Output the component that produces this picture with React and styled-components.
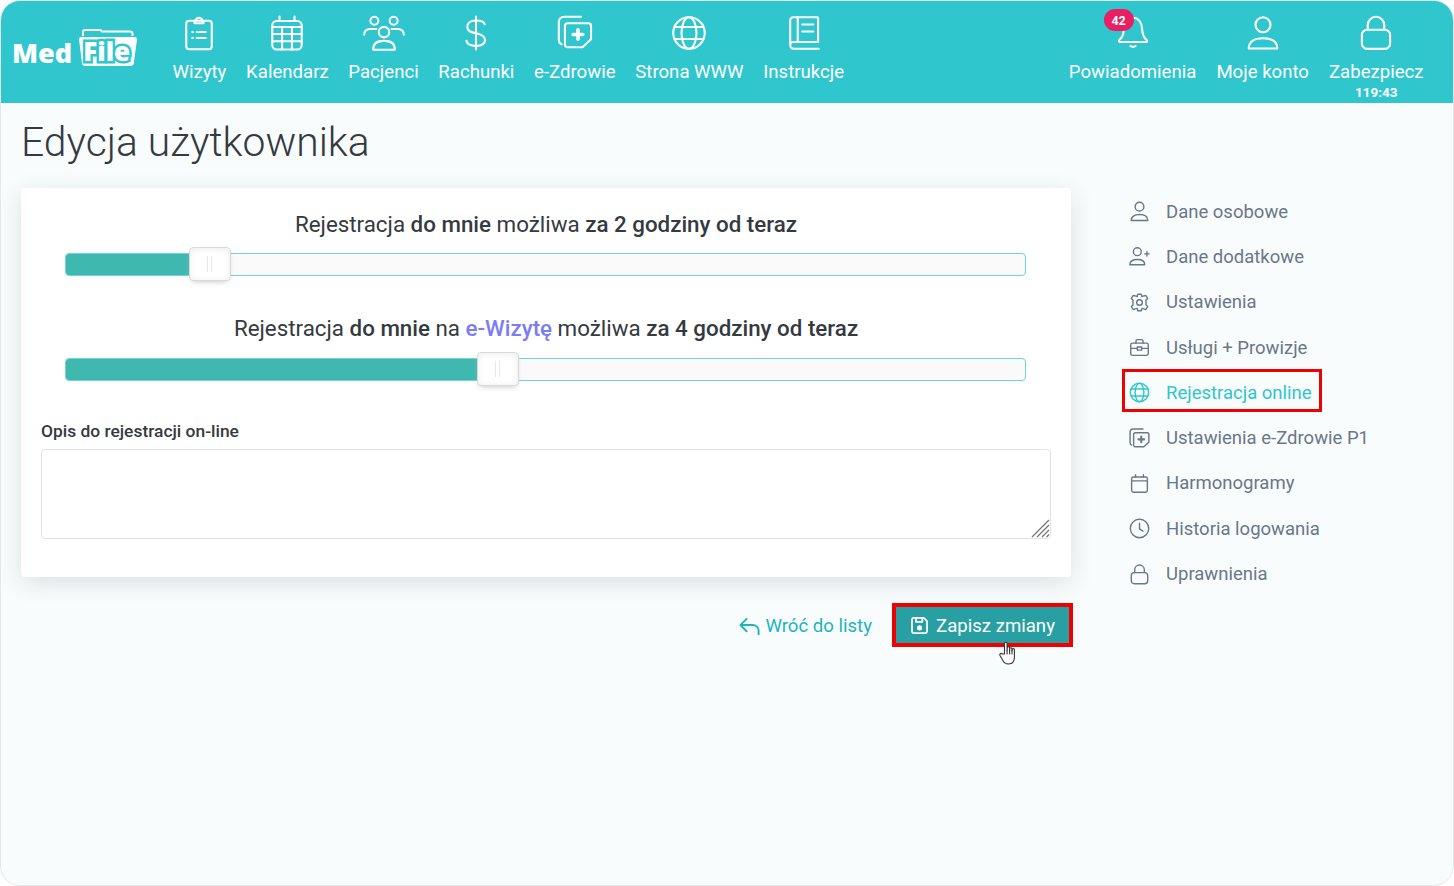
import styled, { createGlobalStyle } from "styled-components";

const GlobalStyle = createGlobalStyle`
  html, body {
    margin: 0;
    padding: 0;
    background: #ffffff;
  }
  *, *::before, *::after {
    box-sizing: border-box;
  }
`;

const Icon = ({ size = 36, sw = 1.4, children }) => (
  <svg width={size} height={size} viewBox="0 0 24 24" fill="none" stroke="currentColor" strokeWidth={sw} strokeLinecap="round" strokeLinejoin="round">
    {children}
  </svg>
);

const icons = {
  clipboard: (
    <>
      <rect x="3.5" y="3.800" width="17" height="19" rx="2" />
      <path d="M9 5.500h6V3.800h-1a2 2 0 0 0-4 0H9z" />
      <path d="M7.500 11.300h.4M7.500 15.300h.4M10.500 11.300h6M10.500 15.300h6" />
    </>
  ),
  calendar: (
    <>
      <rect x="2.200" y="4" width="19.600" height="19" rx="3" />
      <path d="M7 1v3M17 1v3M2.200 8h19.600M2.200 12.700h19.600M2.200 17.500h19.600M8.700 8v15M15.300 8v15" />
    </>
  ),
  users: (
    <>
      <circle cx="6.500" cy="5" r="2.300" />
      <circle cx="17.500" cy="5" r="2.300" />
      <circle cx="12" cy="11.500" r="3" />
      <path d="M.7 13c0-2.300 1.500-3.300 3.500-3.300h3.500M23.300 13c0-2.300-1.500-3.300-3.500-3.300h-3.500" />
      <path d="M5.800 21.300c0-3.300 2.500-4.800 6.200-4.800s6.200 1.500 6.200 4.800c0 .2-.2.3-.4.3H6.200c-.2 0-.4-.1-.4-.3z" />
    </>
  ),
  dollar: <path d="M12 1v22M17.800 6.200C17.200 4.300 15.200 3.700 12 3.700 8.300 3.700 6.200 5.500 6.200 8c0 2.700 2.300 3.500 5.800 4.200 3.500.7 6 1.800 6 4.500 0 2.600-2.500 3.900-6 3.900-3.500 0-5.800-1-6.400-3.400" />,
  health: (
    <>
      <path d="M3 19.500C1.800 19 1.200 18 1.200 16.500V5c0-2.500 1.500-3.800 3.800-3.800h11" />
      <path d="M7 5.500h14a1.700 1.700 0 0 1 1.700 1.700v9L17 21.500H7a1.700 1.700 0 0 1-1.700-1.700V7.200A1.700 1.700 0 0 1 7 5.500z" />
      <path d="M14 9.800v6.400M10.800 13h6.400" strokeWidth="2.400" />
    </>
  ),
  globe: (
    <>
      <circle cx="12" cy="12" r="10.500" />
      <ellipse cx="12" cy="12" rx="5" ry="10.500" />
      <path d="M2.500 8h19M2.500 16h19" />
    </>
  ),
  book: (
    <>
      <path d="M2.800 19.800V3.500a2 2 0 0 1 2-2h16a.6.6 0 0 1 .6.600V18H4.800a2 2 0 0 0-2 1.800 2.400 2.400 0 0 0 2 2.700h17" />
      <path d="M7.800 1.500V18M10.800 6.300h7.400M10.800 11h7.400" />
    </>
  ),
  bell: (
    <>
      <path d="M3 16.500c2-1.500 2.700-3.500 2.900-7C6.200 4.500 8.700 1.800 12 1.800s5.800 2.700 6.100 7.700c.2 3.500.9 5.500 2.900 7 .7.600.5 1.500-.4 1.500H3.400c-.9 0-1.100-.9-.4-1.500z" />
      <path d="M10.300 20.800c1.100.6 2.300.6 3.400 0" />
    </>
  ),
  user: (
    <>
      <circle cx="12" cy="6.500" r="5" />
      <path d="M2.500 22.300c0-4.500 3.500-6.800 9.500-6.800s9.500 2.300 9.500 6.800z" />
    </>
  ),
  lock: (
    <>
      <rect x="2.600" y="9.800" width="18.800" height="12.800" rx="3.500" />
      <path d="M6.500 9.800V6.700a5.500 5.500 0 0 1 11 0v3.100" />
    </>
  ),
  userPlus: (
    <>
      <circle cx="9.500" cy="6.500" r="4.500" />
      <path d="M1 21.500c0-4 3-6 8.500-6s8.500 2 8.500 6z" />
      <path d="M20.500 6.500v5M18 9h5" />
    </>
  ),
  gear: (
    <>
      <circle cx="12" cy="12" r="3.200" />
      <path d="M10 2.500h4l.7 2.800 2-.9 2.600-.4 2 3.400-2 2.100.2 2.500-.2 2.500 2 2.100-2 3.400-2.600-.7-2-.6-.7 2.800h-4l-.7-2.800-2 .6-2.600.7-2-3.400 2-2.100-.2-2.500.2-2.500-2-2.100 2-3.400 2.600.4 2 .9z" />
    </>
  ),
  briefcase: (
    <>
      <rect x="2" y="7" width="20" height="14" rx="2" />
      <path d="M8 7V4.500A1.500 1.500 0 0 1 9.500 3h5A1.500 1.500 0 0 1 16 4.500V7M2 13h7M15 13h7" />
      <rect x="9.500" y="11.500" width="5" height="3.500" />
    </>
  ),
  schedule: (
    <>
      <rect x="3" y="4.500" width="18" height="17.500" rx="2" />
      <path d="M7.500 2v2.500M16.500 2v2.500M3 9h18" />
    </>
  ),
  clock: (
    <>
      <circle cx="12" cy="12" r="10.500" />
      <path d="M12 6v6.500l4 2.500" />
    </>
  ),
  save: (
    <>
      <path d="M4.500 2.500h13L21.500 6.500v13a2 2 0 0 1-2 2h-15a2 2 0 0 1-2-2v-15a2 2 0 0 1 2-2z" strokeWidth="2.200" />
      <path d="M7.500 3v4.500h8V3" strokeWidth="2.200" />
      <circle cx="12" cy="15" r="2.200" fill="currentColor" />
    </>
  ),
  back: <path d="M9 4 2.500 10.500 9 17M3 10.500h12c4 0 6.500 2.500 6.500 6V20" />,
};

const navLeft = [
  { label: "Wizyty", icon: "clipboard" },
  { label: "Kalendarz", icon: "calendar" },
  { label: "Pacjenci", icon: "users", wide: true },
  { label: "Rachunki", icon: "dollar" },
  { label: "e-Zdrowie", icon: "health" },
  { label: "Strona WWW", icon: "globe" },
  { label: "Instrukcje", icon: "book" },
];

const menu = [
  { label: "Dane osobowe", icon: "user" },
  { label: "Dane dodatkowe", icon: "userPlus" },
  { label: "Ustawienia", icon: "gear" },
  { label: "Usługi + Prowizje", icon: "briefcase" },
  { label: "Rejestracja online", icon: "globe", active: true },
  { label: "Ustawienia e-Zdrowie P1", icon: "health" },
  { label: "Harmonogramy", icon: "schedule" },
  { label: "Historia logowania", icon: "clock" },
  { label: "Uprawnienia", icon: "lock" },
];

function App() {
  return (
    <>
      <GlobalStyle />
      <Frame>
        <Header>
          <HeaderLeft>
            <Logo>
              <LogoMed>Med</LogoMed>
              <Folder>
                <svg width="60" height="40" viewBox="0 0 60 40">
                  <path d="M5 9V5q0-2 2.500-2h15l1.500 1.500h28q2.500 0 2.500 2V9" fill="none" stroke="#fff" strokeWidth="2" />
                  <path d="M1 12.500Q.8 10 3 10h54q2.200 0 2 2.500L55.800 36q-.4 3-3 3H7q-2.600 0-3-3z" fill="#fff" />
                </svg>
                <FolderText>File</FolderText>
              </Folder>
            </Logo>
            <NavGroup $gap={19.7}>
              {navLeft.map((item) => (
                <NavItem key={item.label}>
                  <NavIcon><Icon size={item.wide ? 42 : 36} sw={item.wide ? 1.15 : 1.4}>{icons[item.icon]}</Icon></NavIcon>
                  <NavLabel>{item.label}</NavLabel>
                </NavItem>
              ))}
            </NavGroup>
          </HeaderLeft>
          <NavGroup $gap={20}>
            <NavItem>
              <NavIcon>
                <BellWrap>
                  <Icon>{icons.bell}</Icon>
                  <Badge>42</Badge>
                </BellWrap>
              </NavIcon>
              <NavLabel>Powiadomienia</NavLabel>
            </NavItem>
            <NavItem>
              <NavIcon><Icon>{icons.user}</Icon></NavIcon>
              <NavLabel>Moje konto</NavLabel>
            </NavItem>
            <NavItem>
              <NavIcon><Icon>{icons.lock}</Icon></NavIcon>
              <NavLabel>Zabezpiecz</NavLabel>
              <Timer>119:43</Timer>
            </NavItem>
          </NavGroup>
        </Header>
        <Main>
          <Title>Edycja użytkownika</Title>
          <Columns>
            <div>
              <Card>
                <SliderTitle>
                  Rejestracja <b>do mnie</b> możliwa <b>za 2 godziny od teraz</b>
                </SliderTitle>
                <Slider value={129} />
                <SliderTitle $second>
                  Rejestracja <b>do mnie</b> na <EVisit>e-Wizytę</EVisit> możliwa <b>za 4 godziny od teraz</b>
                </SliderTitle>
                <Slider value={417} />
                <FieldLabel>Opis do rejestracji on-line</FieldLabel>
                <TextAreaWrap>
                  <TextArea />
                  <ResizeGrip width="19" height="19" viewBox="0 0 19 19" stroke="#777" strokeWidth="1.3">
                    <path d="M1 18 18 1M6 18 18 6M11 18l7-7M15.500 18l2.500-2.500" />
                  </ResizeGrip>
                </TextAreaWrap>
              </Card>
              <Actions>
                <BackLink>
                  <Icon size={23} sw={2}>{icons.back}</Icon>
                  Wróć do listy
                </BackLink>
                <SaveButton>
                  <Icon size={19} sw={2}>{icons.save}</Icon>
                  Zapisz zmiany
                  <HandCursor>
                    <svg width="18" height="24" viewBox="0 0 18 24" fill="#fff" stroke="#333" strokeWidth="1.1" strokeLinejoin="round" strokeLinecap="round">
                      <path d="M5.500 13V2.500a1.300 1.300 0 0 1 2.600 0V9l.1-2a1.200 1.200 0 0 1 2.400 0v2.500-1.500a1.200 1.200 0 0 1 2.400 0v1.500-.7a1.200 1.200 0 0 1 2.400 0V16c0 4-2 7-6 7-3 0-4.500-1.500-5.500-3.500L1 14.500c-.8-1.500 1-2.800 2.300-1.500z" />
                      <path d="M8.100 9v4M10.600 9v4M13 9v4" />
                    </svg>
                  </HandCursor>
                </SaveButton>
              </Actions>
            </div>
            <Menu>
              {menu.map((item) => (
                <MenuItem key={item.label} $active={item.active}>
                  <MenuIcon><Icon size={21} sw={1.6}>{icons[item.icon]}</Icon></MenuIcon>
                  {item.label}
                </MenuItem>
              ))}
            </Menu>
          </Columns>
        </Main>
      </Frame>
    </>
  );
}

function Slider({ value }) {
  return (
    <Track>
      <Fill style={{ width: value }} />
      <Handle style={{ left: value - 6 }} />
    </Track>
  );
}

const Frame = styled.div`
  width: 1454px;
  height: 886px;
  overflow: hidden;
  background: #f8fcfd;
  border: 1px solid #e4e9ea;
  border-radius: 20px;
  font-family: Roboto, "Liberation Sans", sans-serif;
  color: #343a40;
`;

const Header = styled.header`
  height: 102px;
  background: #2fc6ce;
  color: #fff;
  display: flex;
  justify-content: space-between;
  padding: 0 29.5px 0 11px;
`;

const HeaderLeft = styled.div`
  display: flex;
`;

const Logo = styled.div`
  width: 160.5px;
  display: flex;
  align-items: flex-start;
  gap: 6px;
  padding-top: 26px;
`;

const LogoMed = styled.span`
  font-family: "Open Sans", sans-serif;
  font-size: 27px;
  line-height: 36px;
  font-weight: 800;
  margin-top: 8px;
`;

const Folder = styled.div`
  position: relative;
  width: 60px;
  height: 40px;
  svg {
    display: block;
  }
`;

const FolderText = styled.span`
  position: absolute;
  left: 5px;
  top: 6px;
  font-family: "Open Sans", sans-serif;
  font-size: 26px;
  line-height: 36px;
  font-weight: 800;
  color: #fff;
  -webkit-text-stroke: 5px #2fc6ce;
  paint-order: stroke fill;
`;

const NavGroup = styled.nav`
  display: flex;
  gap: ${(p) => p.$gap}px;
`;

const NavItem = styled.div`
  display: flex;
  flex-direction: column;
  align-items: center;
`;

const NavIcon = styled.div`
  height: 60px;
  display: flex;
  align-items: center;
  justify-content: center;
  padding-top: 4px;
`;

const NavLabel = styled.span`
  font-size: 18.6px;
  line-height: 22px;
`;

const Timer = styled.span`
  font-size: 13.5px;
  font-weight: 700;
  line-height: 18px;
`;

const BellWrap = styled.div`
  position: relative;
  display: flex;
`;

const Badge = styled.span`
  position: absolute;
  top: -6px;
  left: -11px;
  width: 30px;
  height: 22px;
  border-radius: 11px;
  background: #ea1e63;
  color: #fff;
  font-size: 12.5px;
  font-weight: 700;
  display: flex;
  align-items: center;
  justify-content: center;
`;

const Main = styled.main`
  padding: 0 20px;
`;

const Title = styled.h1`
  margin: 0;
  height: 85px;
  padding-top: 15px;
  font-size: 40.8px;
  line-height: 48px;
  font-weight: 300;
  color: #343a40;
`;

const Columns = styled.div`
  display: grid;
  grid-template-columns: 1050px 1fr;
  gap: 51px;
`;

const Card = styled.section`
  height: 389px;
  padding: 20px;
  background: #fff;
  border-radius: 4px;
  box-shadow: 0 6px 24px rgba(0, 30, 40, 0.12);
`;

const SliderTitle = styled.p`
  margin: ${(p) => (p.$second ? "36px" : "0")} 0 0;
  height: ${(p) => (p.$second ? "33px" : "32px")};
  font-size: 22.35px;
  line-height: 32px;
  text-align: center;
  color: #343a40;
  b {
    font-weight: 500;
  }
`;

const EVisit = styled.span`
  color: #7b7cf7;
  font-weight: 500;
`;

const Track = styled.div`
  position: relative;
  margin: 13px 25px 0 24px;
  height: 23px;
  background: #fafafa;
  border: 1.5px solid #6fd3d8;
  border-radius: 4px;
`;

const Fill = styled.div`
  height: 100%;
  background: #3fb8af;
  border-radius: 3px 0 0 3px;
`;

const Handle = styled.div`
  position: absolute;
  top: -7px;
  width: 42px;
  height: 34px;
  background: #fff;
  border: 1px solid #d9d9d9;
  border-radius: 4px;
  box-shadow: inset 0 0 1px #fff, inset 0 1px 7px #ebebeb, 0 3px 6px -3px #bbb;
  &::before,
  &::after {
    content: "";
    position: absolute;
    top: 8px;
    height: 16px;
    width: 1px;
    background: #e8e7e6;
  }
  &::before {
    left: 17px;
  }
  &::after {
    left: 21px;
  }
`;

const FieldLabel = styled.div`
  margin-top: 37px;
  font-size: 17.4px;
  line-height: 27px;
  font-weight: 500;
  color: #343a40;
`;

const TextAreaWrap = styled.div`
  position: relative;
  margin-top: 4px;
`;

const TextArea = styled.textarea`
  display: block;
  width: 100%;
  height: 90px;
  border: 1px solid #dfe3e8;
  border-radius: 4px;
  background: #fff;
  resize: none;
`;

const ResizeGrip = styled.svg`
  position: absolute;
  right: 1px;
  bottom: 1px;
`;

const Actions = styled.div`
  display: flex;
  justify-content: flex-end;
  align-items: center;
  gap: 20px;
  margin-top: 26px;
  margin-right: -2px;
`;

const BackLink = styled.a`
  display: flex;
  align-items: center;
  gap: 4px;
  padding-top: 2px;
  font-size: 18.6px;
  color: #1fb3bd;
`;

const SaveButton = styled.button`
  position: relative;
  width: 181px;
  height: 44px;
  padding: 1px 0 0;
  display: flex;
  align-items: center;
  justify-content: center;
  gap: 7px;
  background: #279fa3;
  border: 4px solid #f00000;
  color: #fff;
  font-family: inherit;
  font-size: 18.6px;
`;

const HandCursor = styled.span`
  position: absolute;
  left: 103px;
  top: 34px;
  display: flex;
`;

const Menu = styled.ul`
  list-style: none;
  margin: 0;
  padding: 1px 0 0;
`;

const MenuItem = styled.li`
  position: relative;
  height: 45.3px;
  padding-left: 5px;
  display: flex;
  align-items: center;
  gap: 15px;
  font-size: 18.5px;
  color: ${(p) => (p.$active ? "#2fc6ce" : "#6a7788")};
  &::after {
    content: "";
    display: ${(p) => (p.$active ? "block" : "none")};
    position: absolute;
    top: -1px;
    bottom: 3px;
    left: 0;
    width: 200px;
    border: 3px solid #f00000;
  }
`;

const MenuIcon = styled.span`
  width: 24px;
  display: flex;
  justify-content: center;
`;

export default App;
